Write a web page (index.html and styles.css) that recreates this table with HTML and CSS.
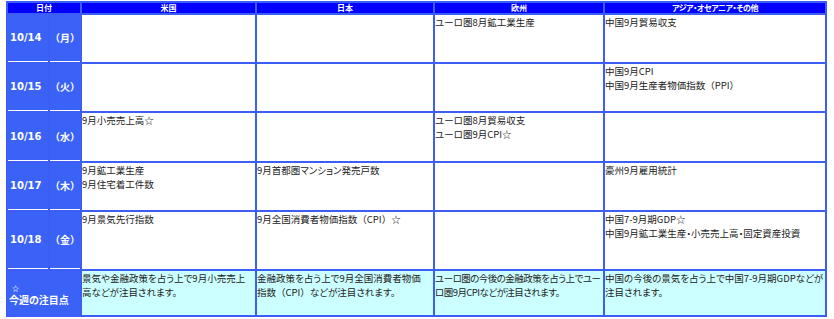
FILE: index.html
```html
<!DOCTYPE html>
<html lang="ja">
<head>
<meta charset="utf-8">
<title>今週の主要経済指標</title>
<link rel="stylesheet" href="styles.css">
</head>
<body>
<table class="cal">
  <colgroup>
    <col class="c-date"><col class="c-wd"><col class="c-us"><col class="c-jp"><col class="c-eu"><col class="c-as">
  </colgroup>
  <thead>
    <tr class="r-head">
      <th colspan="2">日付</th>
      <th>米国</th>
      <th>日本</th>
      <th>欧州</th>
      <th class="narrow">アジア・オセアニア・その他</th>
    </tr>
  </thead>
  <tbody>
    <tr class="r1">
      <td class="date">10/14</td><td class="wd">（月）</td>
      <td></td>
      <td></td>
      <td>ユーロ圏8月鉱工業生産</td>
      <td>中国9月貿易収支</td>
    </tr>
    <tr class="r2">
      <td class="date">10/15</td><td class="wd">（火）</td>
      <td></td>
      <td></td>
      <td></td>
      <td>中国9月CPI<br>中国9月生産者物価指数<span class="fw">（PPI）</span></td>
    </tr>
    <tr class="r3">
      <td class="date">10/16</td><td class="wd">（水）</td>
      <td>9月小売売上高☆</td>
      <td></td>
      <td>ユーロ圏8月貿易収支<br>ユーロ圏9月CPI☆</td>
      <td></td>
    </tr>
    <tr class="r4">
      <td class="date">10/17</td><td class="wd">（木）</td>
      <td>9月鉱工業生産<br>9月住宅着工件数</td>
      <td>9月首都圏マンション発売戸数</td>
      <td></td>
      <td>豪州9月雇用統計</td>
    </tr>
    <tr class="r5">
      <td class="date">10/18</td><td class="wd">（金）</td>
      <td>9月景気先行指数</td>
      <td>9月全国消費者物価指数<span class="fw">（CPI）</span>☆</td>
      <td></td>
      <td>中国7-9月期GDP☆<br>中国9月鉱工業生産・小売売上高・固定資産投資</td>
    </tr>
    <tr class="r-note">
      <td colspan="2" class="label"><span class="star">☆</span><br>今週の注目点</td>
      <td class="note">景気や金融政策を占う上で9月小売売上<br>高などが注目されます。</td>
      <td class="note">金融政策を占う上で9月全国消費者物価<br>指数<span class="fw">（CPI）</span>などが注目されます。</td>
      <td class="note tight">ユーロ圏の今後の金融政策を占う上でユー<br>ロ圏9月CPIなどが注目されます。</td>
      <td class="note">中国の今後の景気を占う上で中国7-9月期GDPなどが<br>注目されます。</td>
    </tr>
  </tbody>
</table>
</body>
</html>
```

FILE: styles.css
```css
html, body {
  margin: 0;
  padding: 0;
  background: #ffffff;
}

.cal {
  margin: 1px 0 0 6px;
  width: 821px;
  table-layout: fixed;
  border-collapse: separate;
  border-spacing: 2px;
  background: #3d5ef5;
  font-family: "Noto Sans CJK JP", "Noto Sans", sans-serif;
  font-size: 9.5px;
  line-height: 14px;
  color: #222222;
  font-feature-settings: "palt";
}

.c-date { width: 40px; }
.c-wd { width: 30px; }
.c-us { width: 173px; }
.c-jp { width: 176px; }
.c-eu { width: 168px; }
.c-as { width: 220px; }

.cal th,
.cal td {
  padding: 0;
  box-sizing: border-box;
}

.cal td {
  background: #ffffff;
  vertical-align: top;
  white-space: nowrap;
  overflow: hidden;
}

.cal .fw {
  font-feature-settings: normal;
}

.cal th {
  background: #0000ff;
  color: #ffffff;
  font-size: 8px;
  line-height: 10px;
  font-weight: 700;
  text-align: center;
  vertical-align: middle;
  overflow: hidden;
  white-space: nowrap;
}

.cal th.narrow {
  letter-spacing: -0.4px;
}

.r-head th { height: 10px; }
.r1 td { height: 47px; }
.r2 td { height: 47px; }
.r3 td { height: 48px; }
.r4 td { height: 47px; }
.r5 td { height: 57px; }
.r-note td { height: 44px; }

.cal td.date,
.cal td.wd,
.cal td.label {
  background: #3a62f6;
  color: #ffffff;
  font-weight: 700;
  vertical-align: middle;
  border-bottom: 1px solid #ffffff;
}

.cal td.date {
  font-family: "DejaVu Sans", sans-serif;
  font-size: 10px;
  padding-left: 2px;
}

.cal td.wd {
  font-size: 10px;
  font-feature-settings: normal;
}

.cal td.label {
  border-bottom: none;
  font-size: 10px;
  line-height: 11px;
  padding-left: 1px;
}

.cal td.label .star {
  font-size: 7px;
  padding-left: 3px;
}

.cal td.note {
  background: #ccffff;
}

.cal td.tight {
  letter-spacing: -0.55px;
}
```
